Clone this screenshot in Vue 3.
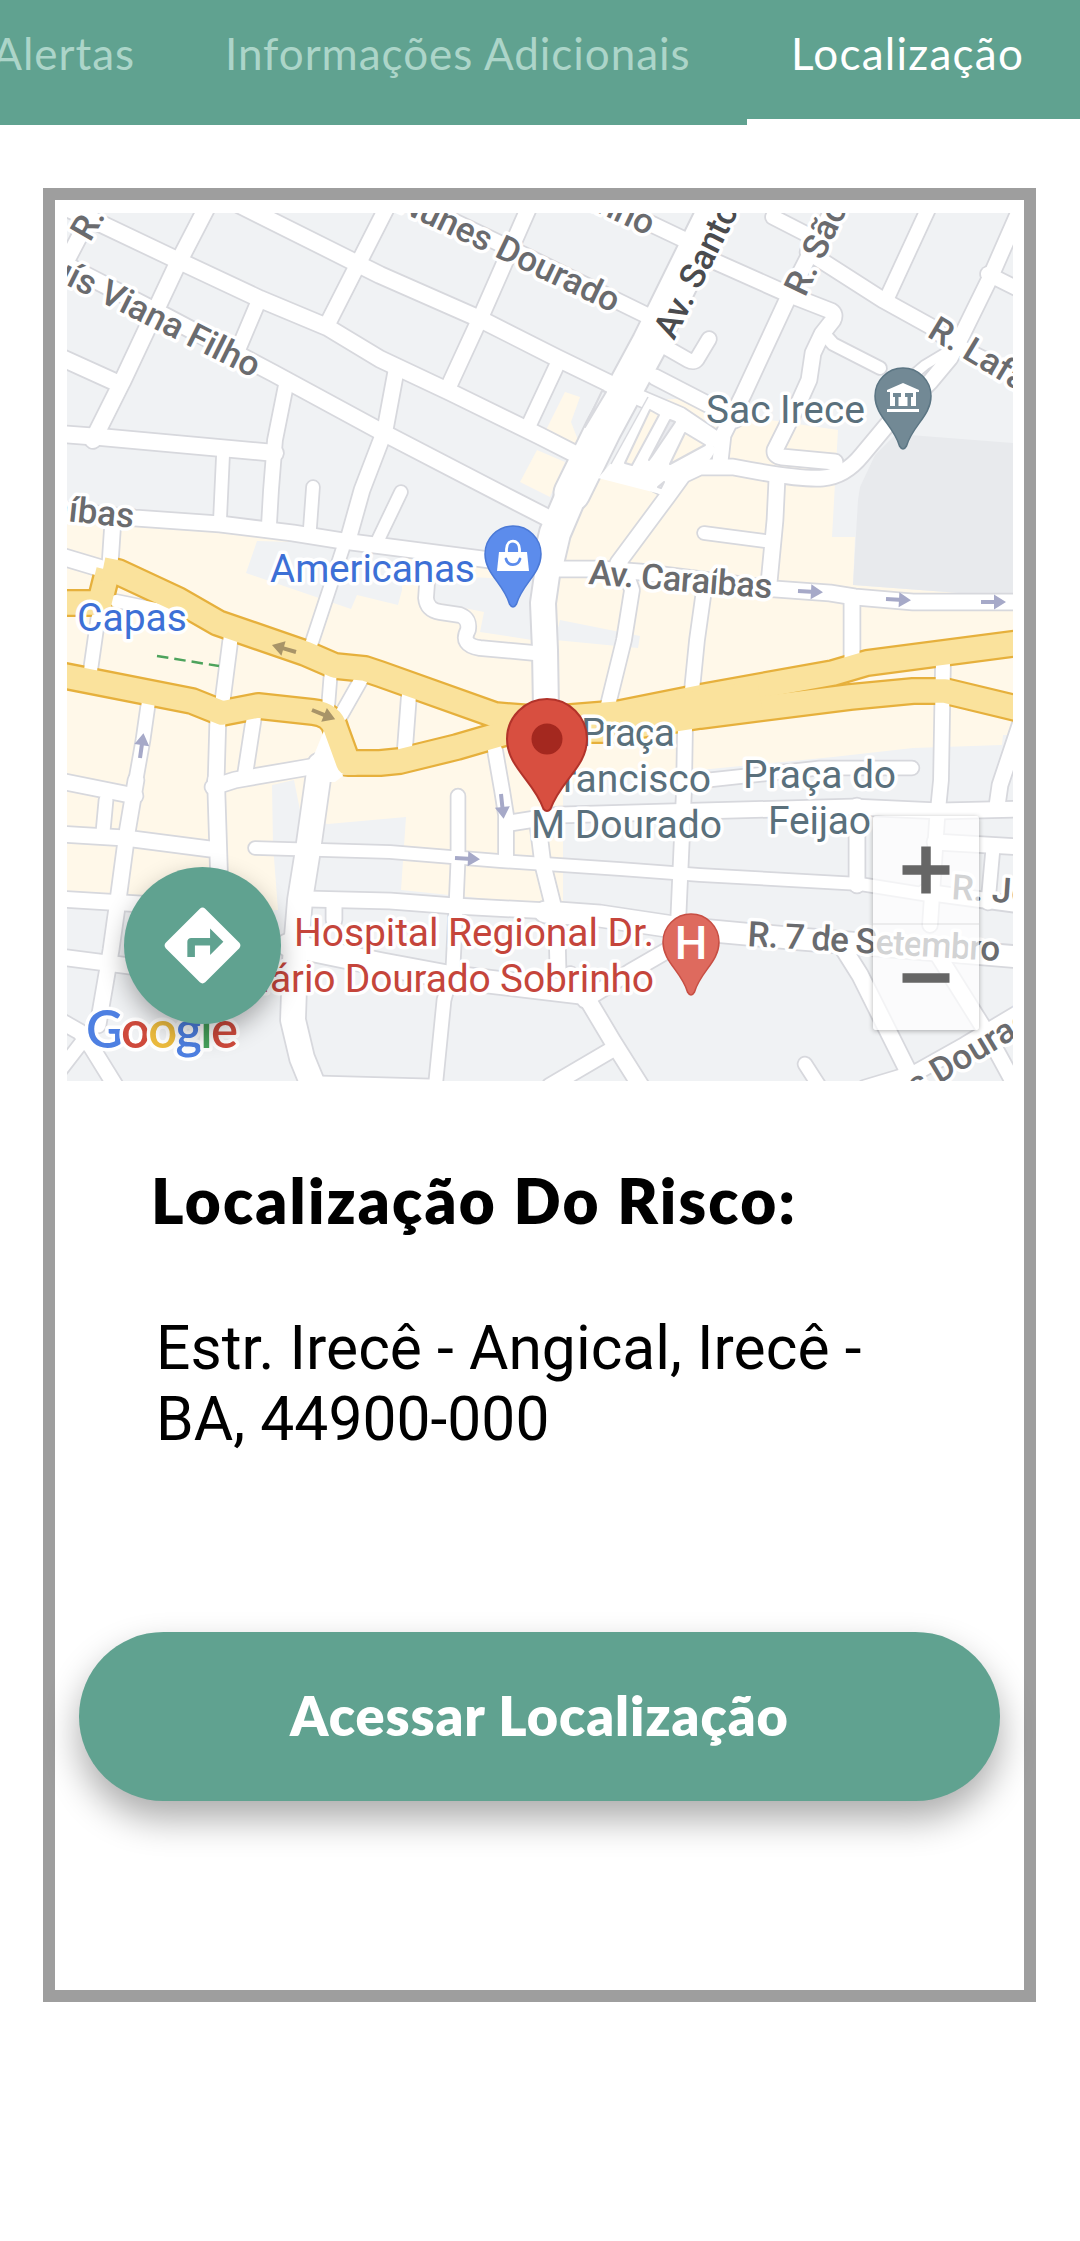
<script setup>
const tabs = [
  { label: 'Alertas', key: 'alertas' },
  { label: 'Informações Adicionais', key: 'info' },
  { label: 'Localização', key: 'local', active: true },
]

// Minor streets: [width, path]
const streets = [
  [15, 'M60 205L93 220L177 260L260 299L327 327L380 359L450 392L540 436L585 459'],
  [15, 'M240 205L350 260L380 275L480 319L557 358L625 391'],
  [14, 'M415 203L503 245L650 317'],
  [14, 'M567 184L685 240'],
  [15, 'M60 262L167 317L273 373L380 431L513 500L550 519'],
  [15, 'M60 357L115 382'],
  [15, 'M208 205L177 265L122 382L93 440'],
  [14, 'M388 205L327 325'],
  [13, 'M257 305L238 350'],
  [14, 'M88 220L66 262'],
  [13, 'M287 380L275 440L271 490L269 525'],
  [11, 'M223 455L220 520'],
  [14, 'M396 371L385 430L362 490L348 540'],
  [11, 'M343 548L311 645'],
  [11, 'M313 487L310 528'],
  [11, 'M401 492L378 540'],
  [14, 'M530 205L483 312L448 388'],
  [13, 'M557 365L528 427'],
  [15, 'M60 434L100 437L275 453'],
  [14, 'M60 510L135 518L220 524L293 533L343 541L390 547L490 560'],
  [14, 'M545 569L600 569L640 572L775 589L830 593L855 597L913 602L1020 602'],
  [14, 'M700 255L725 266L790 295L831 311Q836 314 833 320L822 334L813 353L809 380L800 400L775 450Q774 456 782 457L835 462'],
  [11, 'M825 335L833 344L880 368'],
  [14, 'M788 298L743 395L723 435L720 462'],
  [14, 'M790 293L840 195'],
  [13, 'M773 217L812 237'],
  [14, 'M808 252L883 300L930 326L955 345L1020 378'],
  [13, 'M930 205L887 298'],
  [14, 'M1022 205L990 278L963 333L950 358L930 382L887 425L862 455Q845 476 823 478Q800 480 733 467L700 467L683 475L667 497L618 563'],
  [8, 'M945 353L925 365L905 382'],
  [13, 'M988 274L1020 290'],
  [13, 'M709 339L697 359Q694 363 688 360L660 344'],
  [14, 'M655 377L715 408L735 420'],
  [14, 'M640 398L680 415L717 440'],
  [14, 'M620 467L645 478L668 490'],
  [13, 'M625 570L632 590L624 640L608 705'],
  [14, 'M777 478L775 520L769 583'],
  [11, 'M704 533L765 541'],
  [13, 'M704 590L697 640L692 690'],
  [13, 'M685 728L684 790L678 925'],
  [14, 'M852 600L852 660'],
  [13, 'M943 662L941 780L937 820L930 925'],
  [14, 'M1020 725L1000 785L997 806'],
  [14, 'M113 520L110 565'],
  [15, 'M60 556L100 568'],
  [11, 'M116 601L180 614'],
  [12, 'M98 618L90 674'],
  [13, 'M231 635L222 705'],
  [14, 'M218 715L216 785'],
  [13, 'M255 710L245 775'],
  [11, 'M331 670L328 708'],
  [12, 'M362 678L341 715'],
  [12, 'M149 698L143 740L135 785'],
  [14, 'M213 787L235 780L310 767L355 767'],
  [14, 'M60 781L135 796'],
  [14, 'M136 780L127 833L119 893L111 950L98 1025'],
  [14, 'M60 834L125 838L210 849'],
  [12, 'M106 800L103 832'],
  [14, 'M60 899L190 907'],
  [14, 'M60 957L145 968'],
  [15, 'M216 780L219 873L222 920'],
  [11, 'M255 848L390 852L500 861L620 869L700 875L860 884L935 896'],
  [23, 'M320 765L308 850L300 900L295 960L293 1020L302 1058L315 1090'],
  [14, 'M308 899L390 901L455 906L550 911'],
  [20, 'M545 912L600 916L680 928L800 939L900 947L1020 957'],
  [14, 'M334 903L334 920'],
  [21, 'M288 945L380 964L450 977L585 993'],
  [12, 'M458 796L458 860L456 907L453 967L444 1000L435 1090'],
  [13, 'M495 750L502 790L506 815L506 858'],
  [14, 'M510 823L560 815L700 811L853 807L940 811L1020 809'],
  [14, 'M538 825L543 865L553 905L557 930L558 970'],
  [15, 'M570 975L585 995L613 1042L642 1088'],
  [14, 'M613 1049L550 1086'],
  [14, 'M585 1000L630 972L675 946'],
  [12, 'M690 782L783 772L820 768L912 768'],
  [14, 'M857 806L857 885'],
  [15, 'M838 940L860 975L915 1085'],
  [14, 'M938 955L985 1030L1015 1085'],
  [12, 'M805 1064L825 1095'],
  [14, 'M865 1088L915 1073L965 1045L1020 1012'],
  [14, 'M935 842L1020 847'],
  [12, 'M993 848L988 903'],
  [14, 'M925 892L1020 905'],
  [14, 'M55 1018L80 1032L92 1048L118 1090'],
  [12, 'M82 1042L55 1077'],
  [14, 'M320 1084L430 1087'],
  [13, 'M429 555L426 598Q427 610 440 612L460 615Q470 619 468 630Q460 645 480 648L545 654'],
  [13, 'M409 695L405 748'],
]

const avenue = [
  [35, 'M722 197L650 343L603 430L572 493'],
  [30, 'M603 430L572 493L555 533L548 563'],
  [24, 'M552 545L547 575L543 603L545 650L546 710'],
]

const highways = [
  'M60 603L102 603',
  'M108 570L98 610',
  'M103 569L118 572L178 600L218 623L305 653L335 666L365 669L380 674L495 715L546 719L620 713L700 697L833 673L867 663L1020 643',
  'M60 675L192 701L222 713L258 706L313 712Q332 714 336 730L348 763L380 763L400 761L457 747L505 733L545 730L610 730L700 716L850 697L913 691L945 691L1020 709',
]

// Direction arrows: x, y, angle, colour
const arrows = [
  [798, 591, 3, '#a6a9c8'], [886, 599, 3, '#a6a9c8'], [981, 602, 0, '#a6a9c8'],
  [296, 652, 196, '#a89468'], [312, 710, 22, '#a89468'],
  [140, 758, -82, '#a6a9c8'], [501, 794, 84, '#a6a9c8'], [455, 858, 3, '#a6a9c8'],
]

// Map labels: text, x, y, length, angle, kind, anchor
const labels = [
  ['R.', 90, 243, 0, -60, 'street'],
  ['Luís Viana Filho', 253, 378, 0, 26.5, 'street', 'end'],
  ['Nunes Dourado', 613, 313, 0, 25.5, 'street', 'end'],
  ['inho', 648, 236, 0, 25, 'street', 'end'],
  ['Av. Santos', 674, 341, 0, -63.5, 'street dark'],
  ['R. São', 805, 298, 0, -64.5, 'street'],
  ['R. Lafaiete', 926, 336, 0, 31, 'street'],
  ['Av. Caraíbas', 133, 528, 0, 6, 'street', 'end'],
  ['Av. Caraíbas', 588, 584, 184, 4.5, 'street'],
  ['R. 7 de Setembro', 747, 946, 253, 3.4, 'street'],
  ['R. José', 951, 899, 0, 4, 'street'],
  ['s Dourado', 916, 1098, 0, -31, 'street'],
  ['Sac Irece', 706, 423, 159, 0, 'civic'],
  ['Praça', 581, 746, 94, 0, 'civic'],
  ['Francisco', 711, 792, 0, 0, 'civic', 'end'],
  ['M Dourado', 531, 838, 191, 0, 'civic'],
  ['Praça do', 743, 788, 153, 0, 'civic'],
  ['Feijao', 768, 834, 103, 0, 'civic'],
  ['Capas', 77, 631, 110, 0, 'shop'],
  ['Americanas', 270, 582, 205, 0, 'shop'],
  ['Hospital Regional Dr.', 294, 946, 360, 0, 'health'],
  ['Mário Dourado Sobrinho', 654, 992, 418, 0, 'health', 'end'],
]

const pinPath = 'M0-28C15.500-28 28-15.500 28 0C28 20 9 30 3.500 50Q0 56-3.500 50C-9 30-28 20-28 0C-28-15.500-15.500-28 0-28Z'
</script>

<template>
  <div class="screen">
    <nav class="tabs">
      <div v-for="t in tabs" :key="t.key" class="tab" :class="[t.key, { active: t.active }]">
        <span>{{ t.label }}</span>
      </div>
    </nav>

    <main class="card">
      <div class="map">
        <svg class="canvas" viewBox="67 213 946 868" width="946" height="868">
          <rect x="67" y="213" width="946" height="868" fill="#f0f2f4" />
          <!-- commercial areas -->
          <path fill="#fff8e9" d="M67 515L257 535L530 560L550 555L590 480L625 470L650 400L700 398L770 420L838 430L832 537L855 537L853 585L1013 597V735L1003 735L1002 745L913 748L833 757L700 770L563 785V905L545 905L401 890L406 817L328 824L302 820L294 780L272 785L273 845L278 910L215 915L125 905L67 897Z" />
          <path fill="#fff8e9" d="M565 392L580 397L571 422L578 440L573 447L545 432ZM537 450L565 462L550 497L520 482Z" />
          <path fill="#f0f2f4" d="M257 541L246 573L351 609L357 595L398 605L402 590L402 545ZM430 575L532 580V640L480 632L484 612L435 602ZM560 620L640 636L638 648L555 640Z" />
          <path fill="#e8eaed" d="M860 487L875 455L895 435L910 435L1013 443V597L853 585L858 500Z" />

          <g fill="none" stroke-linejoin="round">
            <g stroke="#d7d8dd" stroke-linecap="round">
              <path v-for="(s, i) in streets" :key="'c' + i" :d="s[1]" :stroke-width="s[0] + 4.500" />
              <path v-for="(s, i) in avenue" :key="'d' + i" :d="s[1]" :stroke-width="s[0] + 4" />
            </g>
            <g stroke="#e6b03c" stroke-width="28">
              <path v-for="(h, i) in highways" :key="'o' + i" :d="h" />
            </g>
            <g stroke="#fff" stroke-linecap="round">
              <path v-for="(s, i) in streets" :key="'w' + i" :d="s[1]" :stroke-width="s[0] + 1" />
              <path v-for="(s, i) in avenue" :key="'x' + i" :d="s[1]" :stroke-width="s[0]" />
            </g>
          </g>

          <!-- interchange east of the avenue -->
          <path fill="#fff" d="M648 397L700 424L716 450L700 474L685 482L668 496L598 478L612 462Z" />
          <path fill="none" stroke="#d9dadf" stroke-width="1.500" d="M648 397L611 464" />
          <g stroke="#d9dadf" stroke-width="2" stroke-linejoin="round">
            <path fill="#fff8e9" d="M650 410L659 415L632 465L625 463Z" />
            <path fill="#e9eaee" d="M670 420L675 422L652 456L649 460Z" />
            <path fill="#fff8e9" d="M685 433L705 445L670 464Z" />
            <path fill="#f0f2f4" d="M602 391L606 392L585 427Z" />
            <path fill="#f0f2f4" d="M664 482L658 487L661 488Z" />
          </g>
          <path fill="#fff" d="M325 728L343 776L335 782H313L314 755Z" />

          <g fill="none" stroke="#fae29c" stroke-width="23.500" stroke-linejoin="round">
            <path v-for="(h, i) in highways" :key="'y' + i" :d="h" />
            <path stroke-width="32" d="M540 724L620 721L760 696" />
          </g>
          <path d="M157 656L219 666" stroke="#4da35c" stroke-width="2.500" stroke-dasharray="11.500 6" />

          <g v-for="(a, i) in arrows" :key="'a' + i" :transform="`translate(${a[0]} ${a[1]}) rotate(${a[2]})`">
            <path :fill="a[3]" d="M0-2H13V-7.500L25 0L13 7.500V2H0Z" />
          </g>

          <text
            v-for="(l, i) in labels"
            :key="'t' + i"
            :class="l[5]"
            :transform="`translate(${l[1]} ${l[2]}) rotate(${l[4]})`"
            :text-anchor="l[6] || 'start'"
            :textLength="l[3] || null"
          >{{ l[0] }}</text>

          <g transform="translate(903 396)">
            <path :d="pinPath" fill="#728995" stroke="#5b7583" stroke-width="1.500" />
            <path fill="#fff" d="M0-13L16-6V-4H-16V-6ZM-13-4H13V10H8V0H5V10H-1.500V0H1.500V10H-5V0H-8V10H-13ZM-16 13H16V16H-16Z" />
            <path fill="#728995" d="M-10-3H-2V1H-4.500V10H-8V1H-10ZM2-3H10V1H8V10H4.500V1H2Z" />
          </g>
          <g transform="translate(513 554)">
            <path :d="pinPath" fill="#5c8cec" stroke="#4b79d6" stroke-width="1.500" />
            <path fill="#fff" d="M-14-2H14L16 17H-16Z" />
            <path fill="none" stroke="#fff" stroke-width="2.800" d="M-6.500 0V-5C-6.500-15.500 6.500-15.500 6.500-5V0" />
            <path fill="none" stroke="#5c8cec" stroke-width="2.800" stroke-linecap="round" d="M-7 5C-5 12.500 5 12.500 7 5" />
          </g>
          <g transform="translate(691 942)">
            <path :d="pinPath" fill="#de6a5e" stroke="#c74e43" stroke-width="1.500" />
            <text class="h" y="16.500" text-anchor="middle">H</text>
          </g>

          <text class="google" x="86" y="1048" textLength="152"><tspan fill="#4e80e2">G</tspan><tspan fill="#cf4a3c">o</tspan><tspan fill="#ecbb3e">o</tspan><tspan fill="#4e80e2">g</tspan><tspan fill="#45a25b">l</tspan><tspan fill="#cf4a3c">e</tspan></text>

          <g transform="translate(547 739)">
            <path fill="#d84f40" stroke="#b2332a" stroke-width="2" d="M0-40C22-40 40-22 40 0C40 28 13 42 3.500 70Q0 74-3.500 70C-13 42-40 28-40 0C-40-22-22-40 0-40Z" />
            <circle r="15.500" fill="#a4281f" />
          </g>
        </svg>

        <button class="fab" aria-label="Rotas">
          <svg viewBox="0 0 24 24" width="91" height="91">
            <path fill="#fff" d="M21.710 11.290l-9-9c-.39-.39-1.020-.39-1.410 0l-9 9c-.39.39-.39 1.020 0 1.410l9 9c.39.39 1.020.39 1.410 0l9-9c.39-.38.39-1.010 0-1.410zM14 14.500V12h-4v3H8v-4c0-.55.45-1 1-1h5V7.500l3.500 3.500-3.500 3.500z" />
          </svg>
        </button>

        <div class="zoom">
          <button aria-label="Aproximar">
            <svg viewBox="0 0 48 48" width="48" height="48"><path d="M24 .5V47.500M.5 24H47.500" stroke="#666" stroke-width="9.500" /></svg>
          </button>
          <button aria-label="Afastar">
            <svg viewBox="0 0 48 48" width="48" height="48"><path d="M.5 24H47.500" stroke="#666" stroke-width="9.500" /></svg>
          </button>
        </div>
      </div>

      <h1>Localização Do Risco:</h1>
      <p class="address">Estr. Irecê - Angical, Irecê -<br />BA, 44900-000</p>
      <button class="cta"><span>Acessar Localização</span></button>
    </main>
  </div>
</template>

<style>
body {
  margin: 0;
  background: #fff;
}
</style>

<style scoped>
.screen {
  width: 1080px;
  height: 2241px;
  overflow: hidden;
  background: #fff;
  font-family: Lato, "Open Sans", sans-serif;
}
button {
  border: 0;
  padding: 0;
  font: inherit;
}
.tabs {
  display: flex;
  justify-content: flex-end;
  height: 125px;
  overflow: hidden;
  background: #60a290;
}
.tab {
  box-sizing: border-box;
  flex: none;
  height: 125px;
  padding-top: 25px;
  font-size: 44px;
  line-height: 56px;
  letter-spacing: 0.95px;
  color: #acd5c9;
  white-space: nowrap;
}
.alertas {
  padding-right: 35px;
}
.info {
  width: 577px;
  padding-left: 55px;
}
.local {
  width: 333px;
  padding-left: 44px;
  letter-spacing: 1.250px;
}
.active {
  color: #fff;
  border-bottom: 6px solid #fff;
}
.card {
  box-sizing: border-box;
  display: flex;
  flex-direction: column;
  width: 993px;
  height: 1814px;
  margin: 63px 0 0 43px;
  padding: 13px 12px 0;
  border: 12px solid #9e9e9e;
}
.map {
  position: relative;
  flex: none;
  width: 946px;
  height: 868px;
  overflow: hidden;
}
.canvas {
  display: block;
}
.canvas text {
  font-family: Roboto, sans-serif;
  font-size: 39px;
  stroke: #fff;
  stroke-width: 7px;
  stroke-linejoin: round;
  paint-order: stroke;
}
.canvas .street {
  font-size: 35px;
  font-weight: 500;
  fill: #6a6b6e;
}
.canvas .dark {
  fill: #4a4b4e;
}
.canvas .civic {
  fill: #5a707c;
}
.canvas .shop {
  fill: #3d70d6;
}
.canvas .health {
  fill: #c5453b;
}
.canvas .h {
  font-size: 46px;
  font-weight: 500;
  fill: #fff;
  stroke: none;
}
.canvas .google {
  font-family: Lato, sans-serif;
  font-size: 51px;
  font-weight: 600;
}
.fab {
  position: absolute;
  left: 57px;
  top: 654px;
  display: flex;
  align-items: center;
  justify-content: center;
  width: 157px;
  height: 157px;
  border-radius: 50%;
  background: #60a290;
  box-shadow: 0 10px 24px rgba(0, 0, 0, 0.3);
}
.zoom {
  position: absolute;
  left: 806px;
  top: 603px;
  width: 106px;
  height: 214px;
  border-radius: 3px;
  background: rgba(255, 255, 255, 0.7);
  box-shadow: 0 1px 5px rgba(0, 0, 0, 0.3);
}
.zoom button {
  box-sizing: border-box;
  display: flex;
  align-items: center;
  justify-content: center;
  width: 106px;
  height: 107px;
  background: none;
}
.zoom button + button {
  border-top: 2px solid rgba(0, 0, 0, 0.06);
}
h1 {
  margin: 81px 0 0 84px;
  font-size: 62px;
  line-height: 76px;
  font-weight: 800;
  letter-spacing: 2.200px;
  color: #000;
  white-space: nowrap;
}
.address {
  margin: 76px 0 0 89px;
  font-family: Roboto, sans-serif;
  font-size: 60.500px;
  line-height: 70.500px;
  letter-spacing: 0.05px;
  color: #000;
  white-space: nowrap;
}
.cta {
  width: 921px;
  height: 169px;
  margin: 177px 0 0 12px;
  flex: none;
  border-radius: 85px;
  background: #60a290;
  color: #fff;
  font-size: 54px;
  font-weight: 800;
  letter-spacing: 0.95px;
  box-shadow: 0 18px 36px rgba(0, 0, 0, 0.33);
}
.cta span {
  display: block;
  margin-top: -2px;
}
</style>
